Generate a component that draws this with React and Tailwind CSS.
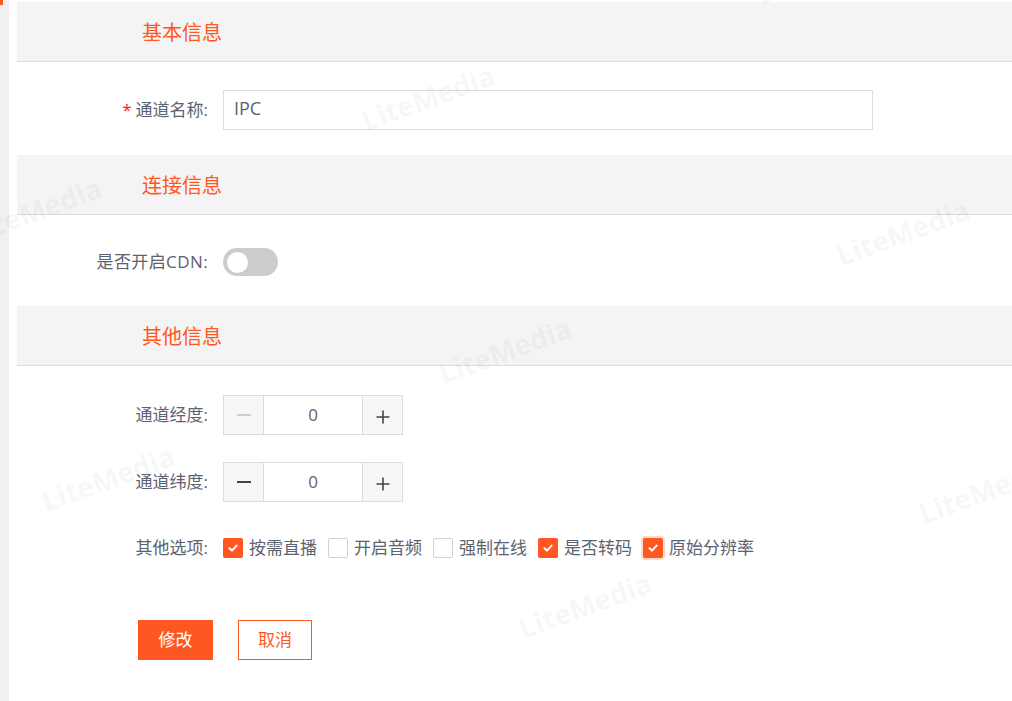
import { useState } from 'react';

const marks = [
  [428, 97],
  [505, 350],
  [585, 605],
  [903, 232],
  [985, 490],
  [35, 210],
  [108, 478],
  [823, -30],
];

function SectionHeader({ title }) {
  return (
    <div className="h-[60px] bg-[#f4f4f4] border-b border-[#dcdcdc] flex items-center pl-[125px]">
      <span className="mt-[3px] text-[20px] text-[#ff5722]">{title}</span>
    </div>
  );
}

function Label({ children, required }) {
  return (
    <div className="w-[191px] shrink-0 text-right text-[17px] text-[#5c6370]">
      {required && <span className="text-[#f5222d] mr-[4px]">*</span>}
      {children}
    </div>
  );
}

function Stepper({ value, disabledMinus }) {
  return (
    <div className="flex h-[40px] w-[180px] border border-[#dcdcdc]">
      <button
        type="button"
        className="w-[40px] bg-[#f7f7f7] border-r border-[#dcdcdc] flex items-center justify-center"
      >
        <span className={'block h-[2px] w-[14px] ' + (disabledMinus ? 'bg-[#cfcfcf]' : 'bg-[#444]')} />
      </button>
      <div className="flex-1 flex items-center justify-center text-[17px] text-[#6b6060]">{value}</div>
      <button
        type="button"
        className="w-[40px] bg-[#f7f7f7] border-l border-[#dcdcdc] flex items-center justify-center"
      >
        <svg width="16" height="16" viewBox="0 0 16 16" className="mt-[3px]">
          <path d="M8 1.5 V14.5 M1.5 8 H14.5" stroke="#444" strokeWidth="1.6" />
        </svg>
      </button>
    </div>
  );
}

function Check({ label, checked, focus }) {
  return (
    <label className="flex items-center mr-[11px]">
      <span
        className={
          'w-[20px] h-[20px] rounded-[2px] flex items-center justify-center ' +
          (checked ? 'bg-[#ff5722]' : 'bg-white border border-[#d2d2d2]') +
          (focus ? ' ring-2 ring-[#ffd8cc]' : '')
        }
      >
        {checked && (
          <svg width="12" height="12" viewBox="0 0 12 12" fill="none">
            <path d="M2.5 6.2 L5 8.6 L9.6 3.6" stroke="white" strokeWidth="2" strokeLinecap="round" strokeLinejoin="round" />
          </svg>
        )}
      </span>
      <span className="ml-[6px] text-[17px] text-[#5c6370]">{label}</span>
    </label>
  );
}

export default function App() {
  const [cdn, setCdn] = useState(false);

  return (
    <div
      className="relative flex h-[701px] w-full overflow-hidden bg-white"
      style={{ fontFamily: '"Open Sans", "Noto Sans CJK SC", sans-serif' }}
    >
      {/* left strip */}
      <div className="relative w-[9px] shrink-0 bg-[#f0f0f0]">
        <div className="absolute left-0 top-0 h-[5px] w-[3px] bg-[#ff5722]" />
      </div>

      <div className="flex-1 pl-[8px] pt-[2px]">
        <SectionHeader title="基本信息" />
        <div className="flex items-center pt-[28px] pb-[25px]">
          <Label required>通道名称:</Label>
          <input
            defaultValue="IPC"
            className="ml-[15px] h-[40px] w-[650px] border border-[#dcdcdc] px-[10px] pb-[4px] text-[18px] text-[#5c6370] outline-none"
          />
        </div>

        <SectionHeader title="连接信息" />
        <div className="flex items-center pt-[33px] pb-[30px]">
          <Label>
            <span className="tracking-[0.4px]">是否开启CDN:</span>
          </Label>
          <button
            type="button"
            onClick={() => setCdn(!cdn)}
            className={
              'ml-[15px] h-[28px] w-[55px] rounded-full flex items-center px-[4px] ' +
              (cdn ? 'bg-[#ff5722] justify-end' : 'bg-[#cccccc] justify-start')
            }
          >
            <span className="h-[21px] w-[21px] rounded-full bg-white" />
          </button>
        </div>

        <SectionHeader title="其他信息" />
        <div className="flex items-center pt-[29px]">
          <Label>通道经度:</Label>
          <div className="ml-[15px]">
            <Stepper value="0" disabledMinus />
          </div>
        </div>
        <div className="flex items-center pt-[27px]">
          <Label>通道纬度:</Label>
          <div className="ml-[15px]">
            <Stepper value="0" />
          </div>
        </div>
        <div className="flex items-center pt-[33px]">
          <Label>其他选项:</Label>
          <div className="ml-[15px] flex items-center">
            <Check label="按需直播" checked />
            <Check label="开启音频" />
            <Check label="强制在线" />
            <Check label="是否转码" checked />
            <Check label="原始分辨率" checked focus />
          </div>
        </div>

        <div className="flex items-center pt-[59px] pl-[121px]">
          <button type="button" className="h-[40px] w-[75px] bg-[#ff5722] text-white text-[17px]">
            修改
          </button>
          <button
            type="button"
            className="ml-[25px] h-[40px] w-[74px] border border-[#ff5722] bg-white text-[#ff5722] text-[17px]"
          >
            取消
          </button>
        </div>
      </div>

      {/* watermark */}
      <div className="pointer-events-none absolute inset-0">
        {marks.map(([x, y], i) => (
          <div
            key={i}
            className="absolute -translate-x-1/2 -translate-y-1/2 -rotate-[20deg] whitespace-nowrap text-[28px] font-bold text-black/[0.05]"
            style={{ left: x, top: y }}
          >
            LiteMedia
          </div>
        ))}
      </div>
    </div>
  );
}
